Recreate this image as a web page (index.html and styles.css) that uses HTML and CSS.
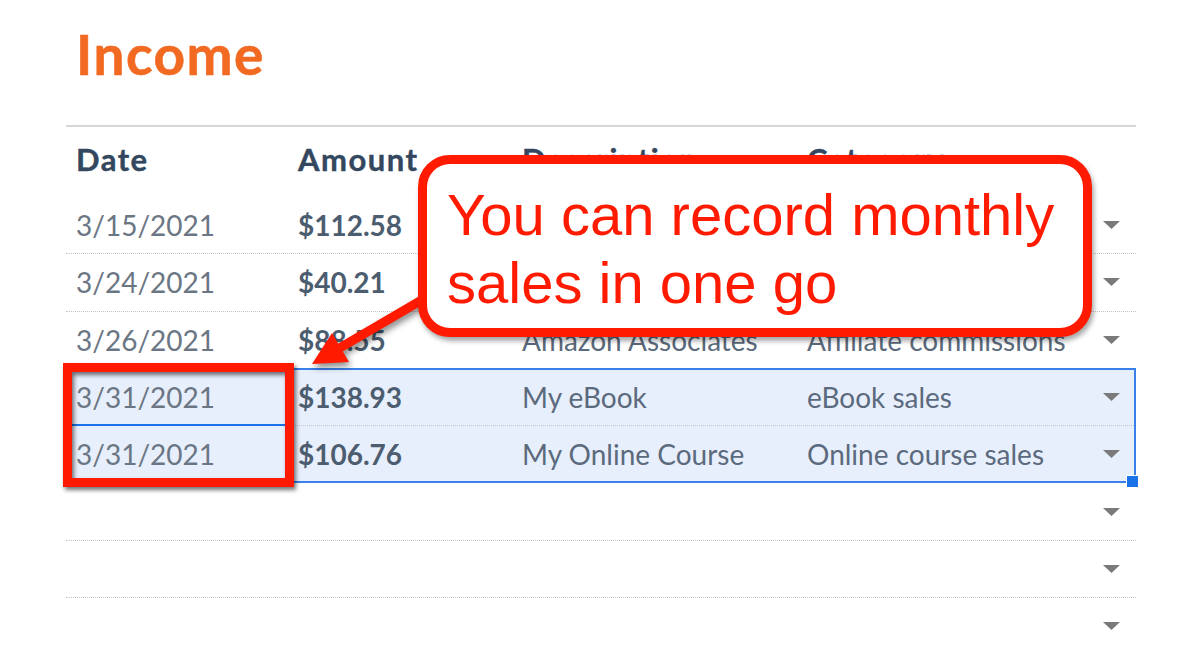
FILE: index.html
```html
<!DOCTYPE html>
<html lang="en">
<head>
<meta charset="utf-8">
<title>Income</title>
<link rel="stylesheet" href="styles.css">
</head>
<body>
<div class="page">
  <h1 class="title">Income</h1>
  <div class="table">
    <div class="row head">
      <div class="cell">Date</div>
      <div class="cell">Amount</div>
      <div class="cell">Description</div>
      <div class="cell">Category</div>
    </div>
    <div class="row">
      <div class="cell date">3/15/2021</div>
      <div class="cell amt">$112.58</div>
      <div class="cell txt"></div>
      <div class="cell txt cat"><span></span><svg class="dd" viewBox="0 0 17 8"><polygon points="0,0 17,0 8.5,8"/></svg></div>
    </div>
    <div class="row">
      <div class="cell date">3/24/2021</div>
      <div class="cell amt">$40.21</div>
      <div class="cell txt"></div>
      <div class="cell txt cat"><span></span><svg class="dd" viewBox="0 0 17 8"><polygon points="0,0 17,0 8.5,8"/></svg></div>
    </div>
    <div class="row">
      <div class="cell date">3/26/2021</div>
      <div class="cell amt">$88.55</div>
      <div class="cell txt">Amazon Associates</div>
      <div class="cell txt cat"><span>Affiliate commissions</span><svg class="dd" viewBox="0 0 17 8"><polygon points="0,0 17,0 8.5,8"/></svg></div>
    </div>
    <div class="selection">
      <div class="row">
        <div class="cell date active">3/31/2021</div>
        <div class="cell amt">$138.93</div>
        <div class="cell txt">My eBook</div>
        <div class="cell txt cat"><span>eBook sales</span><svg class="dd" viewBox="0 0 17 8"><polygon points="0,0 17,0 8.5,8"/></svg></div>
      </div>
      <div class="row">
        <div class="cell date">3/31/2021</div>
        <div class="cell amt">$106.76</div>
        <div class="cell txt">My Online Course</div>
        <div class="cell txt cat"><span>Online course sales</span><svg class="dd" viewBox="0 0 17 8"><polygon points="0,0 17,0 8.5,8"/></svg></div>
      </div>
      <span class="handle"></span>
    </div>
    <div class="row">
      <div class="cell date"></div>
      <div class="cell amt"></div>
      <div class="cell txt"></div>
      <div class="cell txt cat"><span></span><svg class="dd" viewBox="0 0 17 8"><polygon points="0,0 17,0 8.5,8"/></svg></div>
    </div>
    <div class="row">
      <div class="cell date"></div>
      <div class="cell amt"></div>
      <div class="cell txt"></div>
      <div class="cell txt cat"><span></span><svg class="dd" viewBox="0 0 17 8"><polygon points="0,0 17,0 8.5,8"/></svg></div>
    </div>
    <div class="row">
      <div class="cell date"></div>
      <div class="cell amt"></div>
      <div class="cell txt"></div>
      <div class="cell txt cat"><span></span><svg class="dd" viewBox="0 0 17 8"><polygon points="0,0 17,0 8.5,8"/></svg></div>
    </div>
  </div>

  <svg class="arrow" viewBox="0 0 1200 646">
    <line x1="338" y1="349" x2="432" y2="294" />
    <polygon points="312,364 349,362 332,333" />
  </svg>

  <div class="callout">You can record monthly<br>sales in one go</div>

  <div class="redbox"></div>
</div>
</body>
</html>
```
FILE: styles.css
```css
html, body {
  margin: 0;
  padding: 0;
  background: #ffffff;
  overflow: hidden;
}

.page {
  position: relative;
  width: 1200px;
  height: 646px;
  overflow: hidden;
  box-sizing: border-box;
  padding: 28px 64px 0 66px;
  font-family: Lato, "Noto Sans", sans-serif;
}

.title {
  margin: 0 0 44px 10px;
  font-size: 55px;
  line-height: 53px;
  font-weight: 700;
  letter-spacing: 1.5px;
  color: #f26a22;
  -webkit-text-stroke: 0.6px #f26a22;
}

.table {
  border-top: 2px solid #d6d6d6;
}

.row {
  display: grid;
  grid-template-columns: 222px 224px 285px 1fr;
  align-items: center;
  height: 57.3px;
  box-sizing: border-box;
  border-bottom: 1px dotted #c4c4c4;
  font-size: 28px;
  line-height: 34px;
}

.row.head {
  height: 70px;
  border-bottom: none;
  align-items: start;
  padding-top: 15px;
  font-size: 31px;
  font-weight: 700;
  letter-spacing: 1.5px;
  color: #33475e;
  -webkit-text-stroke: 0.4px #33475e;
}

.cell {
  padding-left: 10px;
  white-space: nowrap;
}

.date {
  color: #6b7684;
}

.amt {
  font-weight: 700;
  color: #4c5d70;
}

.txt {
  color: #5b6a7c;
}

.cat {
  display: flex;
  align-items: center;
  justify-content: space-between;
  padding-right: 16px;
}

.dd {
  width: 17px;
  height: 8px;
  flex: none;
  fill: #7a7a7a;
}

.selection {
  position: relative;
  background: #e8effc;
}

.selection::after {
  content: "";
  position: absolute;
  inset: -1px 0 0 0;
  border: 2px solid #3a80ea;
  pointer-events: none;
}

.active {
  position: relative;
  align-self: stretch;
  display: flex;
  align-items: center;
}

.active::after {
  content: "";
  position: absolute;
  inset: -1px 0 -1px 0;
  border: 2px solid #1a73e8;
}

.handle {
  position: absolute;
  right: -3px;
  bottom: -5px;
  width: 11px;
  height: 11px;
  background: #1a73e8;
  border: 1px solid #ffffff;
  z-index: 2;
}

.arrow {
  position: absolute;
  left: 0;
  top: 0;
  width: 1200px;
  height: 646px;
  filter: drop-shadow(2px 4px 3px rgba(0, 0, 0, 0.45));
}

.arrow line {
  stroke: #ff1a00;
  stroke-width: 9;
}

.arrow polygon {
  fill: #ff1a00;
}

.callout {
  position: absolute;
  left: 418px;
  top: 155px;
  width: 674px;
  height: 182px;
  box-sizing: border-box;
  border: 9px solid #ff1a00;
  border-radius: 32px;
  background: #ffffff;
  padding: 17px 0 0 20px;
  font-family: "Liberation Sans", Arial, sans-serif;
  font-size: 58px;
  line-height: 68px;
  color: #ff1a00;
  white-space: nowrap;
  box-shadow: 2px 4px 5px rgba(0, 0, 0, 0.35);
}

.redbox {
  position: absolute;
  left: 63px;
  top: 363px;
  width: 231px;
  height: 124px;
  box-sizing: border-box;
  border: 9px solid #ff1a00;
  filter: drop-shadow(2px 3px 2px rgba(0, 0, 0, 0.55));
}
```
